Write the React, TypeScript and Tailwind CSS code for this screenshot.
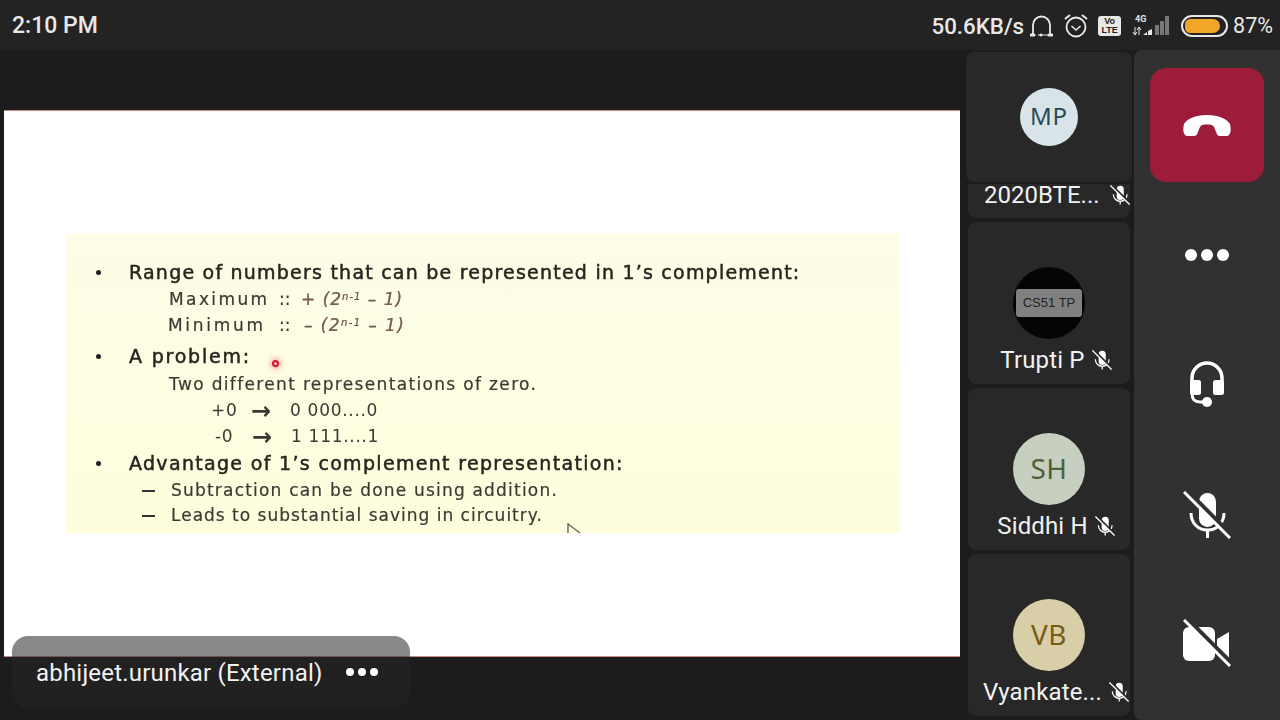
import React from "react";

function MicOff({ size = 20, gap = "#282828" }: { size?: number; gap?: string }) {
  return (
    <svg width={size} height={size} viewBox="0 0 48 48" className="shrink-0">
      <rect x="16" y="2" width="17" height="34" rx="8.5" fill="#fff" />
      <path d="M8 22c0 10 7 17 16.5 17S41 32 41 22" fill="none" stroke="#fff" strokeWidth="3" />
      <path d="M24.5 38v9" stroke="#fff" strokeWidth="3" />
      <path d="M4 0l46 46" stroke={gap} strokeWidth="5" />
      <path d="M1 1l46 46" stroke="#fff" strokeWidth="3" />
    </svg>
  );
}

function Tile({ name, bg, fg, children }: { name: string; bg: string; fg: string; children: React.ReactNode }) {
  return (
    <div className="h-[162px] mb-1 w-[162px] ml-[2px] rounded-lg bg-[#282828] flex flex-col items-center pt-[45px]">
      <div className={`w-[72px] h-[72px] rounded-full flex items-center justify-center pb-[2px] text-[28px] tracking-[0.4px] font-['Noto_Sans',sans-serif] ${bg} ${fg}`}>
        {children}
      </div>
      <div className="mt-[7px] h-[28px] flex items-center gap-[7px] pl-[14px] text-[24px] tracking-[0.15px] leading-[28px] text-[#f2f2f2]">
        <span>{name}</span>
        <MicOff size={20} />
      </div>
    </div>
  );
}

function Line({ h, pl, className = "", children }: { h: string; pl: string; className?: string; children: React.ReactNode }) {
  return <div className={`flex items-center whitespace-pre ${h} ${pl} ${className}`}>{children}</div>;
}

function Bullet() {
  return <span className="absolute left-[30px] w-[5px] h-[5px] rounded-full bg-[#222]" />;
}

const heading = "relative text-[19px] text-[#26261f] [-webkit-text-stroke:0.5px_#26261f]";
const body = "text-[17px] [-webkit-text-stroke:0.2px_#3a3a33]";

function Slide() {
  return (
    <div className="relative ml-1 mt-[60px] h-[547px] w-[956px] bg-white border-y border-[#c98a8a] pt-[123px]">
      <div className="relative ml-[62px] w-[834px] h-[299px] bg-gradient-to-b from-[#fdfde8] to-[#fefedd] pt-[25px] text-[#3a3a33] font-['DejaVu_Sans',sans-serif] blur-[0.55px]">
        <Line h="h-[27px]" pl="pl-[63px]" className={`${heading} tracking-[1.22px]`}><Bullet />Range of numbers that can be represented in 1’s complement:</Line>
        <Line h="h-[27px]" pl="pl-[103px]" className={body}>
          <span className="w-[110px] tracking-[2.4px]">Maximum</span><span className="w-[22px]">::</span>
          <span className="italic text-[#7a5a50] tracking-[1px]">+ (2<sup className="text-[10px]">n-1</sup> – 1)</span>
        </Line>
        <Line h="h-[26px]" pl="pl-[102px]" className={body}>
          <span className="w-[111px] tracking-[2.7px]">Minimum</span><span className="w-[25px]">::</span>
          <span className="italic text-[#7a5a50] tracking-[1.400px]">– (2<sup className="text-[10px]">n-1</sup> – 1)</span>
        </Line>
        <Line h="h-[35px]" pl="pl-[63px]" className={`${heading} tracking-[1.8px]`}><Bullet />A problem:</Line>
        <Line h="h-[27px]" pl="pl-[103px]" className={`-mt-[3px] tracking-[1.34px] ${body}`}>Two different representations of zero.</Line>
        <Line h="h-[25px]" pl="pl-[145px]" className="text-[17px] tracking-[0.7px]">
          <span className="w-[40px]">+0</span><span className="w-[39px] text-[24px] leading-[24px] font-bold">→</span><span>0 000....0</span>
        </Line>
        <Line h="h-[27px]" pl="pl-[149px]" className="text-[17px] tracking-[0.7px]">
          <span className="w-[37px]">-0</span><span className="w-[39px] text-[24px] leading-[24px] font-bold">→</span><span>1 111....1</span>
        </Line>
        <Line h="h-[27px]" pl="pl-[63px]" className={`${heading} tracking-[1.32px]`}><Bullet />Advantage of 1’s complement representation:</Line>
        <Line h="h-[27px]" pl="pl-[105px]" className={`relative tracking-[1.2px] ${body}`}><span className="absolute left-[76px] w-[13px] h-[2px] bg-[#333]" />Subtraction can be done using addition.</Line>
        <Line h="h-[24px]" pl="pl-[105px]" className={`relative tracking-[1px] ${body}`}><span className="absolute left-[76px] w-[13px] h-[2px] bg-[#333]" />Leads to substantial saving in circuitry.</Line>
        <span className="absolute left-[206px] top-[126px] w-[7px] h-[7px] rounded-full border-2 border-[#d8102a] bg-[#fbd] shadow-[0_0_5px_2px_rgba(240,90,90,0.45)]" />
        <svg width="16" height="12" viewBox="0 0 16 12" className="absolute left-[500px] top-[289px]">
          <path d="M2 0v10M2 1l12 9" stroke="#666" strokeWidth="1.4" fill="none" />
        </svg>
      </div>
    </div>
  );
}

function StatusIcons() {
  return (
    <>
      <svg width="23" height="24" viewBox="0 0 23 24" className="ml-[6px] mb-[2px]">
        <path d="M3 20V11a8.500 8.500 0 0 1 17 0v9" fill="none" stroke="#e8e8e8" strokeWidth="1.8" />
        <path d="M1 21h3M19 21h3" stroke="#e8e8e8" strokeWidth="3" strokeLinecap="round" />
        <path d="M8 21h11" stroke="#e8e8e8" strokeWidth="1" />
        <circle cx="11" cy="21" r="1.5" fill="#e8e8e8" />
      </svg>
      <svg width="24" height="26" viewBox="0 0 24 26" className="ml-[11px] mb-[2px]">
        <circle cx="12" cy="14" r="9.500" fill="none" stroke="#e8e8e8" strokeWidth="1.8" />
        <path d="M7.500 13l4.500 4 4.500-4" fill="none" stroke="#e8e8e8" strokeWidth="1.6" />
        <path d="M1 6l5-4M23 6l-5-4" stroke="#e8e8e8" strokeWidth="2" />
      </svg>
      <div className="ml-[10px] mb-[2px] w-[23px] h-[20px] rounded-[3px] bg-[#e8e8e8] flex flex-col items-center justify-center text-[#232323] text-[9px] leading-[9px] font-bold font-['Liberation_Sans',sans-serif]">
        <span>Vo</span>
        <span>LTE</span>
      </div>
      <svg width="38" height="24" viewBox="0 0 38 24" className="ml-[11px] mb-[4px]">
        <text x="3" y="8.500" fontSize="9" fontWeight="700" fill="#e8e8e8" fontFamily="Roboto, sans-serif">4G</text>
        <path d="M3 14v8M1 19l2 3 2-3" fill="none" stroke="#e8e8e8" strokeWidth="1" />
        <path d="M7 22v-8M5 17l2-3 2 3" fill="none" stroke="#e8e8e8" strokeWidth="1" />
        <path d="M11 22l4-3v3zM16 22v-4l4-2v6z" fill="#e8e8e8" />
        <path d="M23 22V12h4v10z" fill="#777" />
        <path d="M28 22V8h4v14zM33 22V3h4v19z" fill="#777" />
      </svg>
      <div className="ml-[11px] mb-[2px] w-[47px] h-[22px] rounded-full border-2 border-[#e8e8e8] p-[2px]">
        <div className="h-full w-[35px] rounded-l-[6px] rounded-r-[8px] bg-[#f2a627]" />
      </div>
      <span className="ml-[5px] text-[21.500px]">87%</span>
    </>
  );
}

export default function App() {
  return (
    <div className="w-[1280px] h-[720px] overflow-hidden flex flex-col bg-[#1c1c1c] font-['Roboto',sans-serif]">
      <div className="h-[50px] bg-[#232323] flex items-center justify-between pl-3 pr-[7px] pt-[3px] text-[#e8e8e8]">
        <span className="text-[23px] font-medium">2:10 PM</span>
        <div className="flex items-center">
          <span className="text-[22.300px] font-medium">50.6KB/s</span>
          <StatusIcons />
        </div>
      </div>
      <div className="flex-1 flex min-h-0">
        <div className="relative w-[966px]">
          <Slide />
          <div className="absolute left-[12px] top-[586px] w-[398px] h-[72px] rounded-2xl bg-[#262626]/55 flex items-center justify-between pl-6 pr-[32px] pt-[1px] text-[24px] tracking-[0.2px] text-[#f2f2f2]">
            <span>abhijeet.urunkar (External)</span>
            <div className="flex gap-[4px] mb-[2px]">
              <span className="w-[8px] h-[8px] rounded-full bg-white" />
              <span className="w-[8px] h-[8px] rounded-full bg-white" />
              <span className="w-[8px] h-[8px] rounded-full bg-white" />
            </div>
          </div>
        </div>
        <div className="w-[168px] pt-[2px]">
          <div className="h-[130px] w-[166px] rounded-lg bg-[#282828] flex items-center justify-center pb-[1px]">
            <div className="w-[58px] h-[58px] rounded-full bg-[#d8e4e8] text-[#2b4a55] text-[24px] tracking-[0.8px] pb-[2px] font-['Noto_Sans',sans-serif] flex items-center justify-center">MP</div>
          </div>
          <div className="mt-[2px] mb-1 ml-[2px] w-[162px] h-[34px] rounded-b-lg bg-[#282828] flex items-center gap-[10px] pl-4 pb-[13px] text-[24px] text-[#f2f2f2]">
            <span>2020BTE...</span>
            <MicOff size={20} />
          </div>
          <Tile name="Trupti P" bg="bg-[#050505]" fg="">
            <span className="mt-[2px] w-[66px] h-[28px] rounded-[3px] bg-[#808080] text-[#222] text-[13px] tracking-normal font-['Liberation_Sans',sans-serif] flex items-center justify-center">CS51 TP</span>
          </Tile>
          <Tile name="Siddhi H" bg="bg-[#c7d0c0]" fg="text-[#4f5f3a]">SH</Tile>
          <Tile name="Vyankate..." bg="bg-[#d8cfa8]" fg="text-[#7a5c14]">VB</Tile>
        </div>
        <div className="relative w-[146px] rounded-l-lg bg-[#313131] flex flex-col items-center pt-[10px]">
          <div className="h-[130px] flex items-center">
            <div className="w-[114px] h-[114px] rounded-2xl bg-[#9c1c3a] flex items-center justify-center">
              <svg width="48" height="23" viewBox="0 0 48 23">
                <path d="M24 1C36 1 44 5 47 10C48 14 48 19 46 21C45 22 44 22 43 22H37C35 22 34 21 33.500 19L31 13C30 11 28 10.500 24 10.500C20 10.500 18 11 17 13L14.500 19C14 21 13 22 11 22H5C4 22 3 22 2 21C0 19 0 14 1 10C4 5 12 1 24 1Z" fill="#fff" />
              </svg>
            </div>
          </div>
          <div className="h-[130px] flex items-center gap-[4px]">
            <span className="w-[12px] h-[12px] rounded-full bg-white" />
            <span className="w-[12px] h-[12px] rounded-full bg-white" />
            <span className="w-[12px] h-[12px] rounded-full bg-white" />
          </div>
          <div className="h-[130px] flex items-center">
            <svg width="36" height="46" viewBox="0 0 36 46" className="mb-[3px]">
              <path d="M3 24V17a15 15 0 0 1 30 0v7" fill="none" stroke="#fff" strokeWidth="3.500" />
              <rect x="1" y="19" width="11" height="15" rx="2.500" fill="#fff" />
              <rect x="24" y="19" width="11" height="15" rx="2.500" fill="#fff" />
              <path d="M3 32c0 7 3 9 8 9h6" fill="none" stroke="#fff" strokeWidth="3" />
              <circle cx="18" cy="41" r="5" fill="#fff" />
            </svg>
          </div>
          <div className="h-[130px] flex items-center">
            <MicOff size={48} gap="#313131" />
          </div>
          <div className="h-[130px] flex items-center">
            <svg width="48" height="48" viewBox="0 0 48 48" className="mb-[4px]">
              <rect x="0" y="8" width="32" height="34" rx="6" fill="#fff" />
              <path d="M34 20l12-7v28l-12-7z" fill="#fff" />
              <path d="M4 0l46 46" stroke="#313131" strokeWidth="5" />
              <path d="M1 1l46 46" stroke="#fff" strokeWidth="3" />
            </svg>
          </div>
        </div>
      </div>
    </div>
  );
}
